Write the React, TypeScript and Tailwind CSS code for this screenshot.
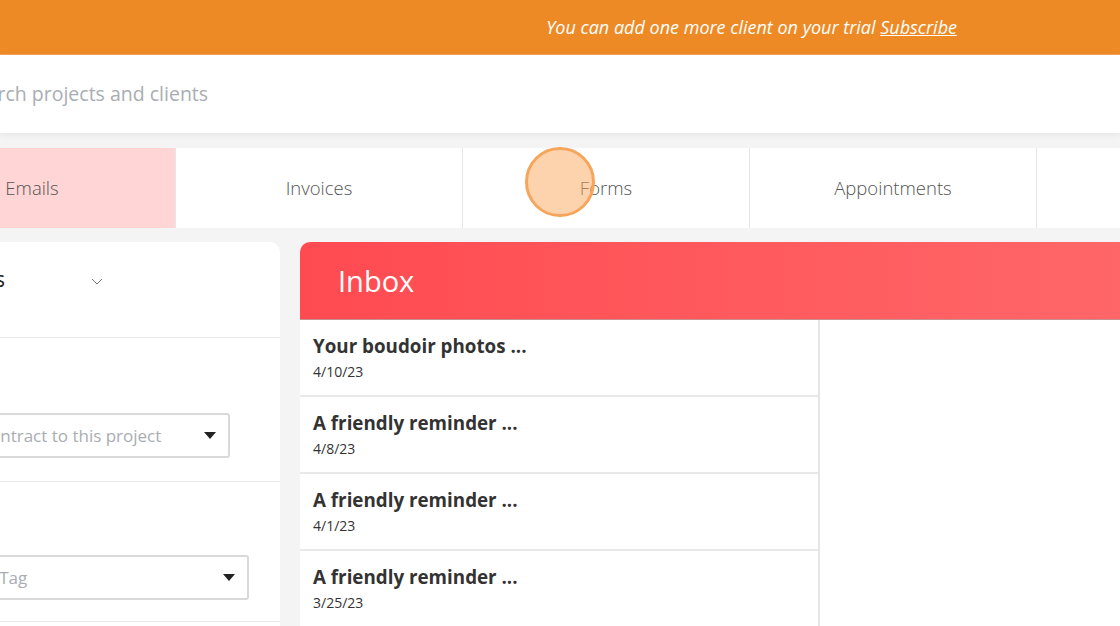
const emails = [
  { title: "Your boudoir photos ...", date: "4/10/23" },
  { title: "A friendly reminder ...", date: "4/8/23" },
  { title: "A friendly reminder ...", date: "4/1/23" },
  { title: "A friendly reminder ...", date: "3/25/23" },
];

const tabs = ["Emails", "Invoices", "Forms", "Appointments", "Files"];

function Caret() {
  return (
    <svg width="12" height="7" viewBox="0 0 12 7" className="shrink-0">
      <path d="M0 0h12L6 7z" fill="#222" />
    </svg>
  );
}

function Select({ text, className }: { text: string; className: string }) {
  return (
    <div
      className={`flex h-[45px] items-center justify-between rounded-[3px] border-2 border-[#d9d9d9] bg-white pl-3 pr-[12px] ${className}`}
    >
      <span className="text-[17px] text-[#a9adb3]">{text}</span>
      <Caret />
    </div>
  );
}

export default function App() {
  return (
    <div className="relative h-[626px] w-[1120px] overflow-hidden bg-[#f4f4f4] font-['Open_Sans',sans-serif]">
      {/* trial banner */}
      <div className="flex h-[55px] items-center justify-end border-b border-[#f2a45a] bg-[#ed8a25] pr-[163px]">
        <p className="text-[18px] italic text-white">
          You can add one more client on your trial{" "}
          <a className="underline">Subscribe</a>
        </p>
      </div>

      {/* search */}
      <div className="flex h-[78px] items-center bg-white shadow-[0_2px_6px_rgba(0,0,0,0.06)]">
        <span className="-ml-[35px] text-[19.5px] text-[#a9adb3]">Search projects and clients</span>
      </div>

      {/* tabs */}
      <div className="mt-[15px] -ml-[111px] flex h-[80px]">
        {tabs.map((t, i) => (
          <div
            key={t}
            className={`flex w-[287px] shrink-0 items-center justify-center border-r border-[#e6e6e6] text-[18.5px] font-light text-[#555] ${
              i === 0 ? "bg-[#ffd5d6]" : "bg-white"
            }`}
          >
            {t}
          </div>
        ))}
      </div>

      {/* click marker */}
      <div className="absolute left-[525px] top-[147px] h-[70px] w-[70px] rounded-full border-[3px] border-[#f5a65c] bg-[#fca85c]/50" />

      <div className="mt-[14px] flex gap-[20px]">
        {/* left card */}
        <div className="-ml-[200px] w-[480px] shrink-0 rounded-tr-[10px] bg-white">
          <div className="flex h-[96px] items-center border-b border-[#ececec] pb-[20px]">
            <span className="w-[205px] shrink-0 text-right text-[21px] text-[#222]">Actions</span>
            <svg width="12" height="7" viewBox="0 0 12 7" className="ml-[86px] mt-1">
              <path d="M1 1l5 5 5-5" fill="none" stroke="#777" strokeWidth="1" />
            </svg>
          </div>
          <div className="flex h-[144px] flex-col justify-center border-b border-[#ececec] pl-[118px] pt-[6px]">
            <Select text="Add a contract to this project" className="mt-[46px] w-[312px]" />
          </div>
          <div className="flex h-[140px] flex-col justify-center border-b border-[#ececec] pl-[120px]">
            <Select text="Select a Tag" className="mt-[52px] w-[329px]" />
          </div>
        </div>

        {/* inbox */}
        <div className="flex-1 overflow-hidden rounded-tl-[10px] bg-white">
          <div className="flex h-[78px] items-center border-b border-[#c98f8f] bg-gradient-to-r from-[#ff4a51] to-[#ff6668] pl-[38px]">
            <h1 className="text-[29px] text-white">Inbox</h1>
          </div>
          <div className="flex">
            <ul className="w-[520px] border-r-2 border-[#e6e6e6]">
              {emails.map((e, i) => (
                <li key={i} className="flex h-[77px] flex-col justify-center border-b-2 border-[#e9e9e9] pl-[13px] pt-[2px]">
                  <span className="text-[18.8px] font-bold leading-[27px] text-[#333]">{e.title}</span>
                  <span className="text-[14px] leading-[24px] text-[#333]">{e.date}</span>
                </li>
              ))}
            </ul>
            <div className="flex-1" />
          </div>
        </div>
      </div>
    </div>
  );
}
